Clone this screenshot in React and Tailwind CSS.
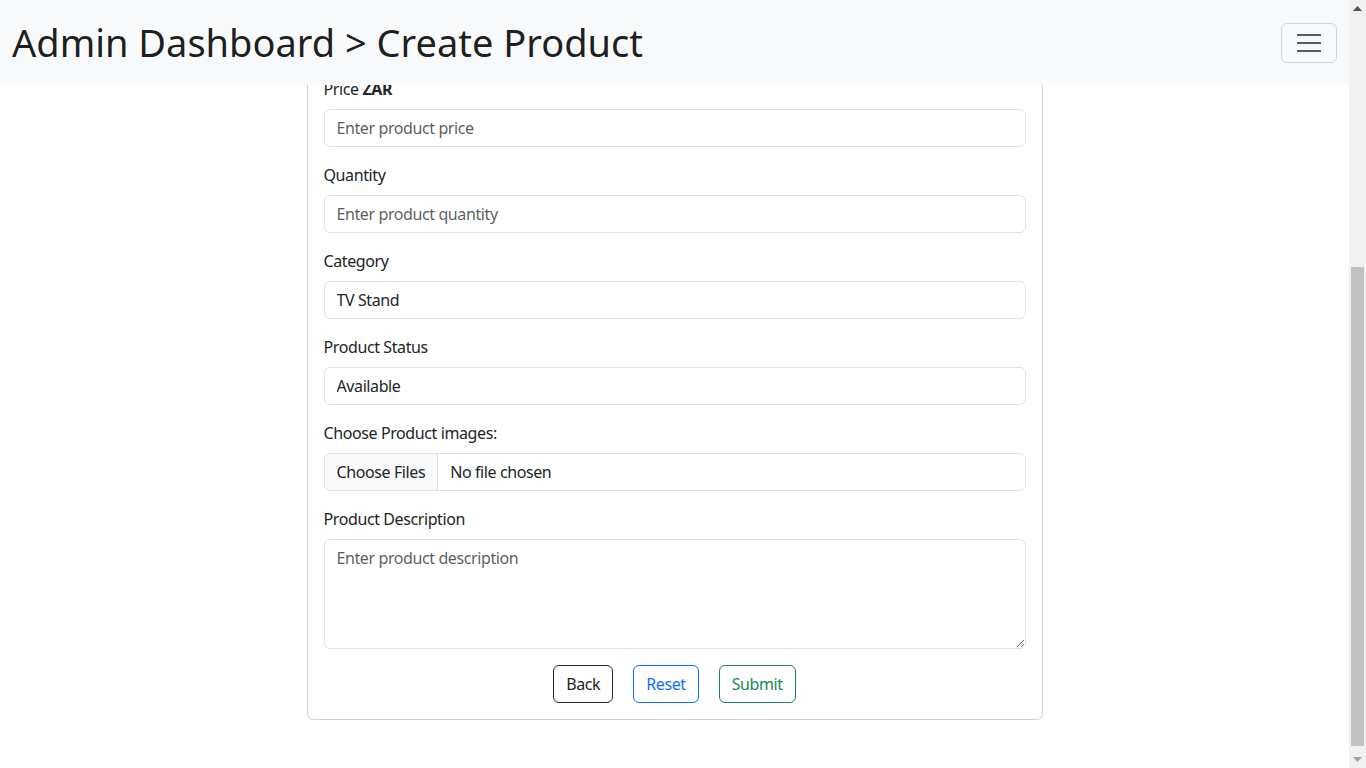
// Form field wrapper: label + control, bootstrap-ish spacing
function Field({ label, children }) {
  return (
    <div className="mb-4">
      <label className="block mb-2 leading-6">{label}</label>
      {children}
    </div>
  )
}

const inputCls =
  "block w-full h-[38px] px-3 py-[6px] text-base leading-6 text-[#212529] bg-white border border-[#dee2e6] rounded-[6px] outline-none tracking-[-0.4px] placeholder:text-[rgba(33,37,41,0.75)]"

function TextInput({ placeholder, value }) {
  return value !== undefined
    ? <input className={inputCls} defaultValue={value} readOnly />
    : <input className={inputCls} placeholder={placeholder} />
}

function FileInput() {
  return (
    <div className="flex h-[38px] w-full border border-[#dee2e6] rounded-[6px] overflow-hidden bg-white">
      <span className="flex items-center px-3 bg-[#f8f9fa] border-r border-[#dee2e6]">Choose Files</span>
      <span className="flex items-center px-3">No file chosen</span>
    </div>
  )
}

function ScrollbarDrawing() {
  return (
    <div className="w-[17px] h-screen shrink-0 bg-[#f1f1f1] flex flex-col">
      <div className="h-[17px] flex items-center justify-center">
        <svg width="9" height="5" viewBox="0 0 9 5"><path d="M0 5 L4.5 0 L9 5 Z" fill="#505050" /></svg>
      </div>
      <div className="flex-1 pt-[250px] px-[2px]">
        <div className="h-[479px] bg-[#c1c1c1]" />
      </div>
      <div className="h-[17px] flex items-center justify-center">
        <svg width="9" height="5" viewBox="0 0 9 5"><path d="M0 0 L4.5 5 L9 0 Z" fill="#a3a3a3" /></svg>
      </div>
    </div>
  )
}

export default function App() {
  return (
    <div className="flex h-screen w-full overflow-hidden bg-white text-[#212529] text-base tracking-[-0.4px] font-['Segoe_UI','Noto_Sans',sans-serif]">
      <div className="relative flex-1 h-screen overflow-hidden">
        {/* fixed navbar, lies over the scrolled form */}
        <nav className="absolute top-0 inset-x-0 z-10 h-[85px] bg-[#f8f9fa] flex items-center justify-between px-3">
          <h1 className="text-[38px] leading-[1.2] text-black/90 tracking-[0px]">Admin Dashboard &gt; Create Product</h1>
          <button className="w-[56px] h-[40px] border border-[#d3d4d5] rounded-[6px] flex flex-col items-center justify-center gap-[6px]">
            <span className="block w-6 h-[2px] bg-[#595c5f]" />
            <span className="block w-6 h-[2px] bg-[#595c5f]" />
            <span className="block w-6 h-[2px] bg-[#595c5f]" />
          </button>
        </nav>

        <div className="pt-[60px] pb-[50px]">
          <div className="w-[736px] mx-auto border border-[rgba(0,0,0,0.175)] rounded-[6px] p-4">
            <Field label={<>Price <b className="font-bold">ZAR</b></>}>
              <TextInput placeholder="Enter product price" />
            </Field>
            <Field label="Quantity">
              <TextInput placeholder="Enter product quantity" />
            </Field>
            <Field label="Category">
              <TextInput value="TV Stand" />
            </Field>
            <Field label="Product Status">
              <TextInput value="Available" />
            </Field>
            <Field label="Choose Product images:">
              <FileInput />
            </Field>
            <Field label="Product Description">
              <textarea
                className="block w-full h-[110px] px-3 py-[6px] leading-6 border border-[#dee2e6] rounded-[6px] outline-none tracking-[-0.4px] placeholder:text-[rgba(33,37,41,0.75)]"
                placeholder="Enter product description"
              />
            </Field>
            <div className="flex justify-center gap-5">
              <button className="h-[38px] px-3 border border-[#212529] text-[#212529] rounded-[6px]">Back</button>
              <button className="h-[38px] px-3 border border-[#0d6efd] text-[#0d6efd] rounded-[6px]">Reset</button>
              <button className="h-[38px] px-3 border border-[#198754] text-[#198754] rounded-[6px]">Submit</button>
            </div>
          </div>
        </div>
      </div>
      <ScrollbarDrawing />
    </div>
  )
}
